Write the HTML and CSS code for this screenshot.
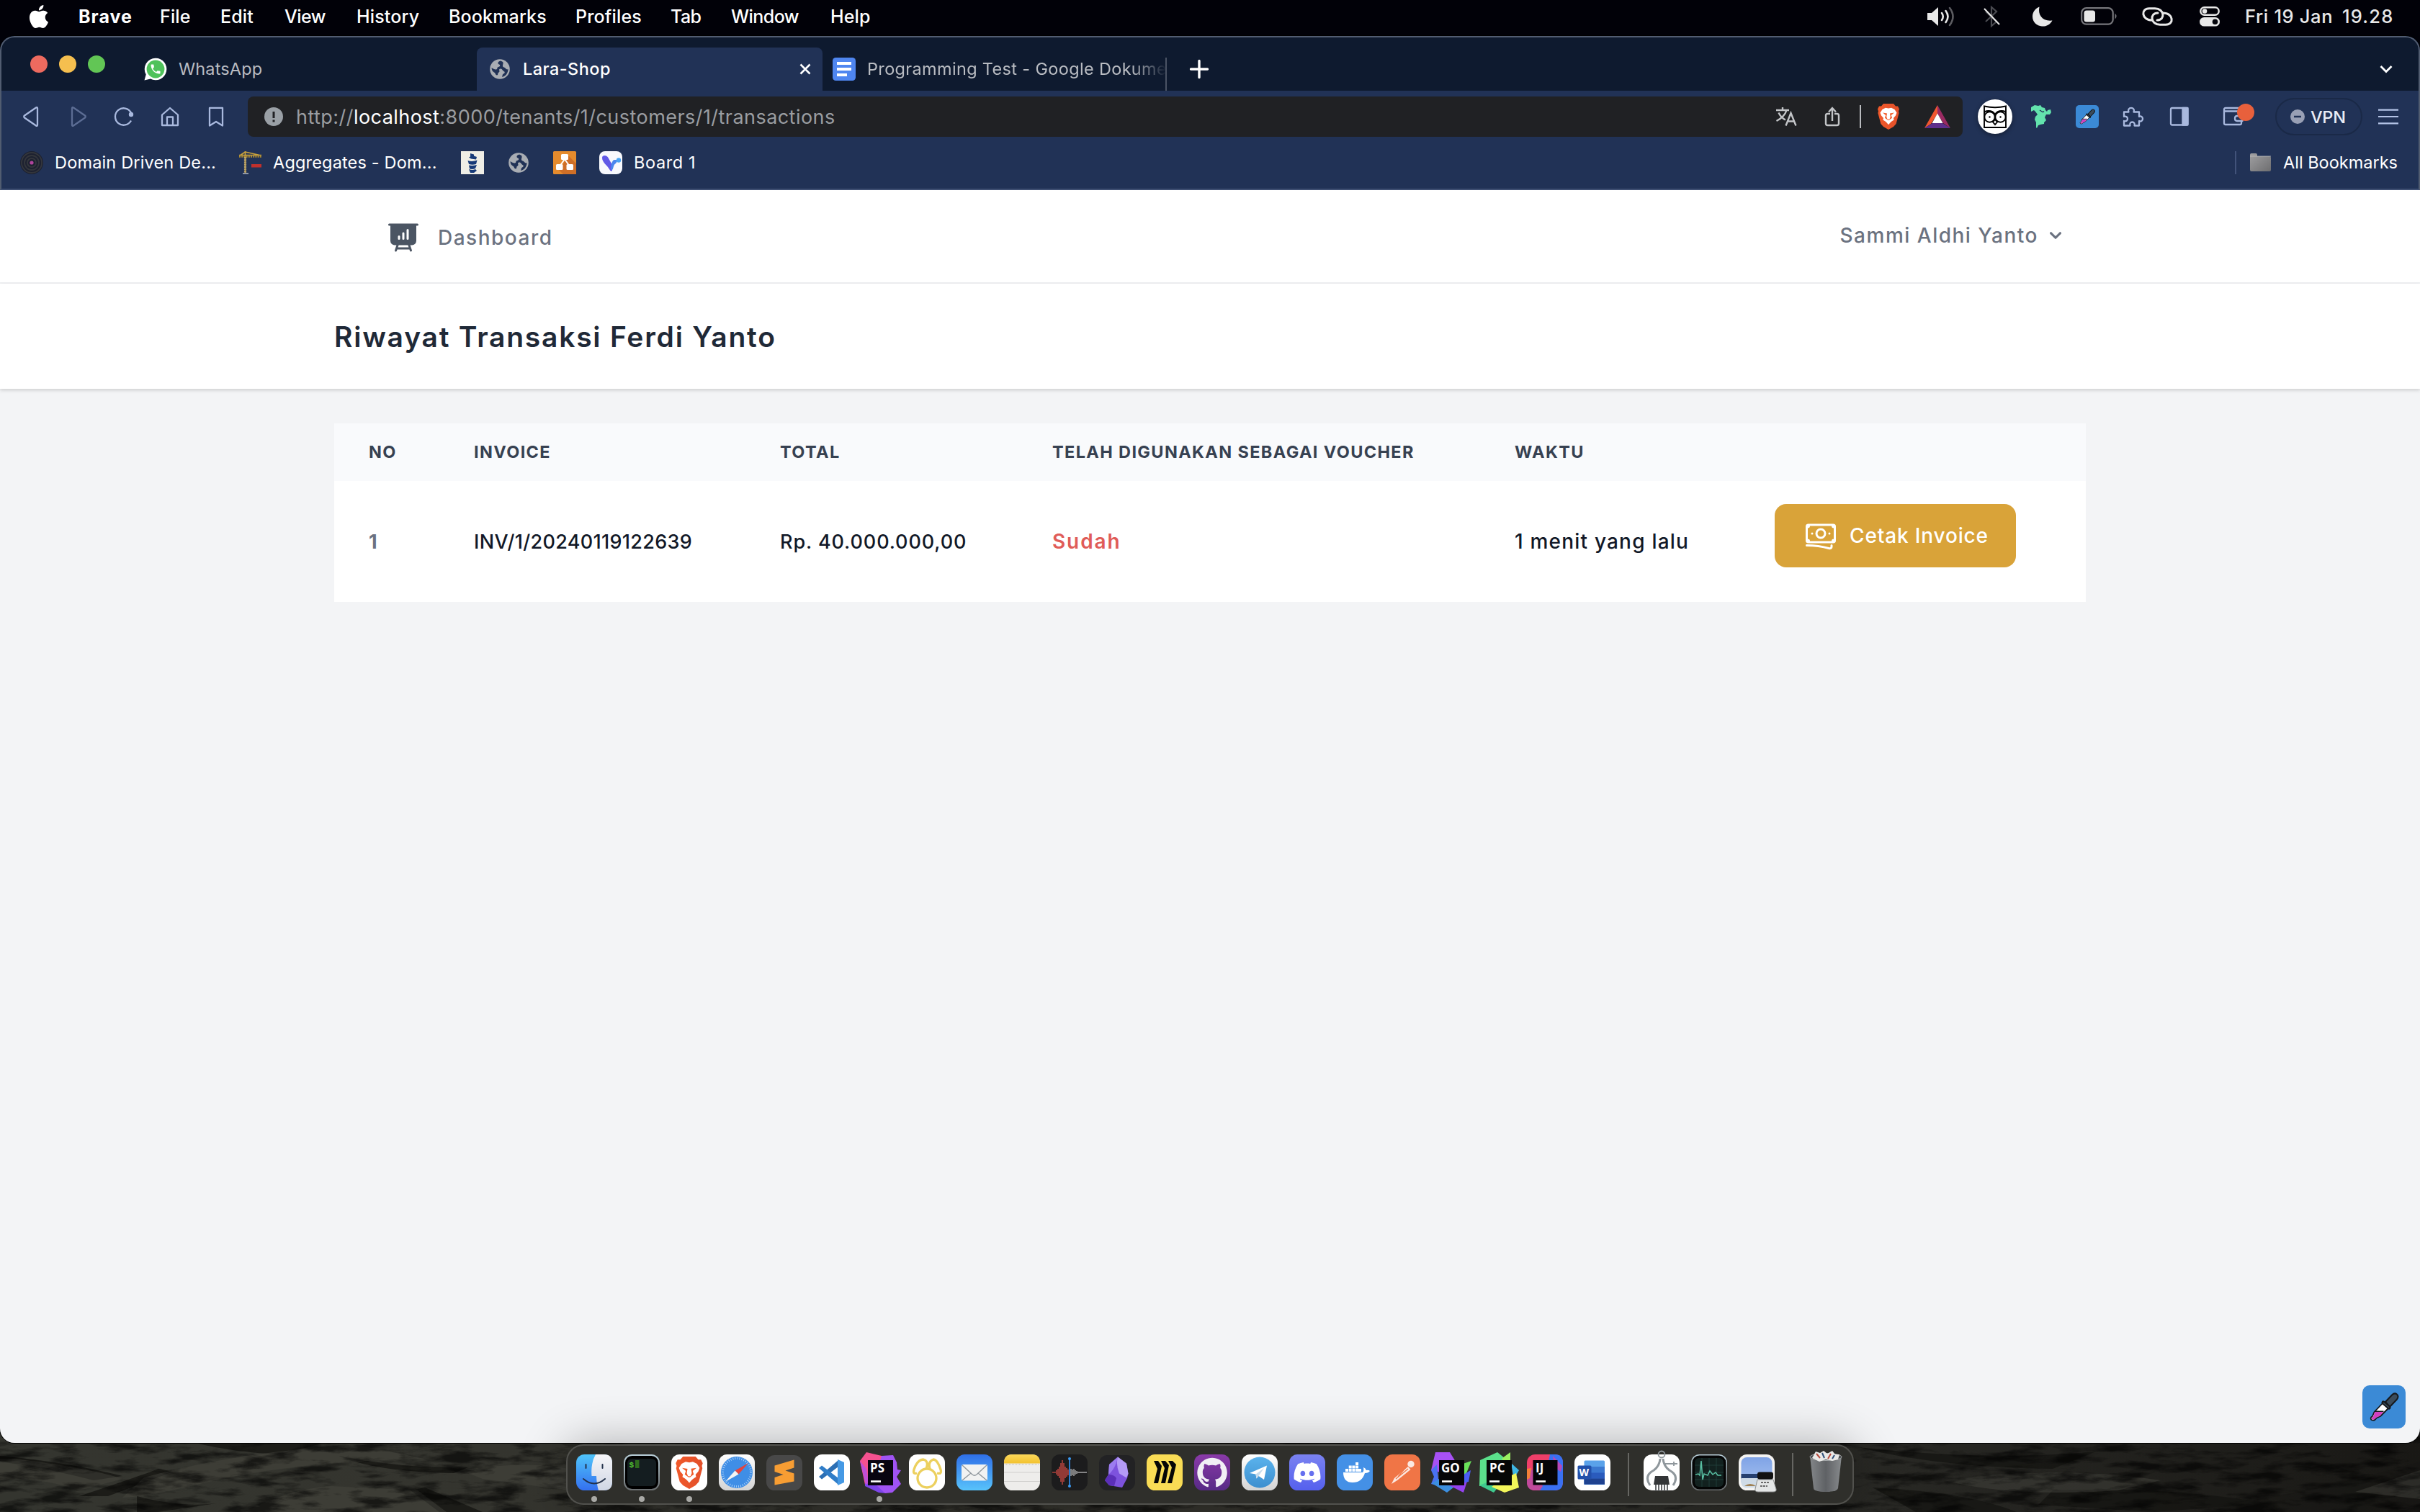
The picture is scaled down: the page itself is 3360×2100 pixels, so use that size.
FILE: index.html
```html
<!DOCTYPE html>
<html lang="id">
<head>
<meta charset="utf-8">
<title>Lara-Shop</title>
<link rel="stylesheet" href="styles.css">
</head>
<body>
<svg class="defs" width="0" height="0" aria-hidden="true">
  <symbol id="lion" viewBox="0 0 32 36">
    <path fill="url(#lionGrad)" d="M9 0h14l3 3.400h3l2 4-1 3 .6 2.600-4 15-3.600 4L16 36l-7-4-3.600-4-4-15 .600-2.600-1-3 2-4h3z"/>
    <path fill="#fff" d="M16 6.600l4-.800 4.500 2.200 3 4.500-1.500 4-3 3.500.6 2.500L16 27.500 8.400 22.500l.6-2.500-3-3.500-1.500-4 3-4.500L12 5.800z"/>
    <path fill="#f05a28" d="M8 12.600l6 .900-.8 4.800 1.300 3.200L16 22l1.500-.500 1.300-3.200-.8-4.800 6-.900-4.200 3.400 1.200 3.800L16 23.600l-5-3.800 1.200-3.800z"/>
    <path fill="#fff" d="M12 24.500l4-1.800 4 1.800-4 4.700z"/>
  </symbol>
  <symbol id="globe" viewBox="0 0 28 28">
    <circle cx="14" cy="14" r="13.800" fill="#a9adb3"/>
    <path fill="#213256" d="M15 2.500c-4 1-4.500 4-2 5 2 .8 1.500 3-1 3.500-2.200.5-1 2.500-2.500 3.200-1.600.8-4.500-.2-6.900-2.200 0 3 .8 5 3.400 6.500 2 1 1.500 2.500 2.800 3.500 1.200 1 2.500.5 2.500-1.500 0-2 3-2 2-4.500-.6-1.500 0-2.500 1.700-2.500 2.500 0 2.500 2.500 4.500 3.500 2 1 1.500 2.500-.5 3.500s-1 3-2 4.500c4.500-1 8.500-5 8.500-11-1 .8-2.600.4-3.500-1-1.200-2-3.500-1-4-3C17.600 8 19 7 18.500 5c-.3-1.500-2-1.500-3.500-2.500z"/>
  </symbol>
  <symbol id="dropper" viewBox="0 0 60 60">
    <path d="M12.500 48c-1.500-2-1-3.500 1.500-5l2.500-6 12.500-13 8 7-12 12-5.500 2.500c-1.500 2.500-4 4-7 2.500z" fill="#fff" stroke="#16191d" stroke-width="1.800" stroke-linejoin="round"/>
    <path d="M13.300 47.300c-1-1.500-.5-2.300 1.700-3.800L17.500 37H29l-4.500 5.500-5.500 2.500c-1.500 2.500-3.700 3.300-5.700 2.300z" fill="#d23fc0"/>
    <path d="M17 36.200h12.500" stroke="#16191d" stroke-width="1.600"/>
    <path d="M32 23l9-9.500c5-5 11 .5 7 6L38 30z" fill="#3b4c5c" stroke="#16191d" stroke-width="2"/>
    <path d="M29 24l8 7" stroke="#16191d" stroke-width="5" stroke-linecap="round"/>
    <path d="M29.500 24.500l7 6" stroke="#3b4c5c" stroke-width="1.600" stroke-linecap="round"/>
  </symbol>
  <defs>
    <linearGradient id="lionGrad"><stop offset="0" stop-color="#f1592a"/><stop offset="1" stop-color="#e2502a"/></linearGradient>
    <linearGradient id="gBlue" x2="0" y2="1"><stop offset="0" stop-color="#2f6fe8"/><stop offset="1" stop-color="#58c3fb"/></linearGradient>
    <linearGradient id="gFinder" x2="0" y2="1"><stop offset="0" stop-color="#4fc4fa"/><stop offset="1" stop-color="#3470ef"/></linearGradient>
    <linearGradient id="gFace" x2="0" y2="1"><stop offset="0" stop-color="#f6f6f9"/><stop offset="1" stop-color="#cfd6e4"/></linearGradient>
    <linearGradient id="gPurple" x2="0" y2="1"><stop offset="0" stop-color="#8a3aa8"/><stop offset="1" stop-color="#572a86"/></linearGradient>
    <linearGradient id="gDiscord" x2="0" y2="1"><stop offset="0" stop-color="#7a82f0"/><stop offset="1" stop-color="#5560ee"/></linearGradient>
    <linearGradient id="gTele" x2="0" y2="1"><stop offset="0" stop-color="#5ab2ec"/><stop offset="1" stop-color="#3d8fcf"/></linearGradient>
    <linearGradient id="gGrey" x2="0" y2="1"><stop offset="0" stop-color="#ffffff"/><stop offset="1" stop-color="#d4d4d4"/></linearGradient>
    <linearGradient id="gNote" x2="0" y2="1"><stop offset="0" stop-color="#fbd85a"/><stop offset="1" stop-color="#f2c12e"/></linearGradient>
    <linearGradient id="gTrash"><stop offset="0" stop-color="#8b8e91"/><stop offset=".5" stop-color="#63666a"/><stop offset="1" stop-color="#909396"/></linearGradient>
    <linearGradient id="gFolder" x2="1" y2="1"><stop offset="0" stop-color="#a0a0a2"/><stop offset="1" stop-color="#6e6e70"/></linearGradient>
    <linearGradient id="gSteel" x2="0" y2="1"><stop offset="0" stop-color="#b9d0da"/><stop offset="1" stop-color="#6a6e70"/></linearGradient>
    <linearGradient id="gSky" x2="0" y2="1"><stop offset="0" stop-color="#7fa3e6"/><stop offset="1" stop-color="#a9c4f0"/></linearGradient>
    <linearGradient id="gLand"><stop offset="0" stop-color="#34352f"/><stop offset=".5" stop-color="#34332d"/><stop offset=".75" stop-color="#2a2a26"/><stop offset="1" stop-color="#191815"/></linearGradient>
    <filter id="rock" x="0" y="0" width="100%" height="100%"><feTurbulence type="fractalNoise" baseFrequency=".018 .07" numOctaves="5" seed="11"/><feColorMatrix values="0 0 0 0 0  0 0 0 0 0  0 0 0 0 0  3.400 0 0 0 -1.500"/></filter>
  </defs>
</svg>

<svg class="desktop" viewBox="0 0 3360 140" width="3360" height="140" preserveAspectRatio="none">
  <rect width="3360" height="140" fill="url(#gLand)"/>
  <g fill="#141411" opacity=".75">
    <path d="M270 44h180l-60 16q-60-2-120-16z"/>
    <path d="M0 62q90 8 170 28l-40 6Q60 78 0 70z"/>
    <path d="M110 118q90-30 110-38l20 4-90 34zM470 62q90 18 180 16l-20 8q-110-2-160-24z"/>
    <path d="M190 118q60 16 110 10l-80 12h-30zM590 106l80 34h-60l-40-30z"/>
    <path d="M2580 50q180 20 330 6l-60 24q-160-2-270-30zM2850 110q160-6 300 18l-160 12-160-10z"/>
    <path d="M3080 130q120-14 280-60v70h-280z" opacity=".4"/>
    <path d="M2600 106q130 6 200 34h-140z"/>
  </g>
  <g fill="#484840" opacity=".45">
    <path d="M20 66q110 14 150 28l-60 16Q50 90 0 96V66z"/>
    <path d="M200 92q150-40 300-44l90 18q-180 4-300 32-90 22-120 22z"/>
    <path d="M340 140q60-32 120-36l120 6 40 30zM640 82q90-14 150-2v30l-120-16z"/>
    <path d="M2700 96q160-22 300 0l-60 14q-150 10-240-14zM3270 112l90-30v40z"/>
  </g>
  <rect width="3360" height="140" filter="url(#rock)" opacity=".6"/>
</svg>

<header class="menubar">
  <nav class="menus">
    <svg class="apple" viewBox="0 0 24 24" width="32" height="32"><path fill="#fff" d="M12.152 6.896c-.948 0-2.415-1.078-3.960-1.040-2.040.027-3.910 1.183-4.961 3.014-2.117 3.675-.546 9.103 1.519 12.090 1.013 1.454 2.208 3.090 3.792 3.039 1.520-.065 2.090-.987 3.935-.987 1.831 0 2.350.987 3.960.948 1.637-.026 2.676-1.480 3.676-2.948 1.156-1.688 1.636-3.325 1.662-3.415-.039-.013-3.182-1.221-3.220-4.857-.026-3.040 2.480-4.494 2.597-4.559-1.429-2.090-3.623-2.324-4.390-2.376-2-.156-3.675 1.090-4.610 1.090zM15.530 3.830c.843-1.012 1.400-2.427 1.245-3.830-1.207.052-2.662.805-3.532 1.818-.780.896-1.454 2.338-1.273 3.714 1.338.104 2.715-.688 3.559-1.701"/></svg>
    <b>Brave</b><span>File</span><span>Edit</span><span class="snug">View</span><span>History</span><span>Bookmarks</span><span>Profiles</span><span class="snug">Tab</span><span class="snug">Window</span><span>Help</span>
  </nav>
  <div class="status">
    <svg viewBox="0 0 40 28" width="40" height="28"><path fill="#e8e8e8" d="M0 9h6l9-8v26l-9-8H0z"/><g fill="none" stroke-width="2.600" stroke-linecap="round"><path stroke="#e8e8e8" d="M20 9q3.500 5 0 10M25.500 6q6 8 0 16"/><path stroke="#5b5b60" d="M31 2q9 12 0 24"/></g></svg>
    <svg viewBox="0 0 24 30" width="24" height="30"><path d="M3 8l15 14-7 6V2l7 6L3 22" fill="none" stroke="#4a4b51" stroke-width="2.200"/><path d="M1 4l21 22" stroke="#e8e8e8" stroke-width="2"/></svg>
    <svg viewBox="0 0 28 28" width="28" height="28"><path fill="#e8e8e8" d="M9.500.5C7 12 14 21 27.500 19.500 24 26 18 28 13 27.500 6 27 0 21.500 0 14 0 8 3.500 3 9.500.5z"/></svg>
    <svg viewBox="0 0 52 26" width="52" height="26"><rect x="1.200" y="1.200" width="43.500" height="22.500" rx="6.500" fill="none" stroke="#77777c" stroke-width="2.200"/><rect x="4.500" y="4.500" width="15.500" height="16" rx="3.500" fill="#e8e8e8"/><path d="M47.500 8.500q4 4 0 8z" fill="#77777c"/></svg>
    <svg viewBox="0 0 44 26" width="44" height="26"><g fill="none" stroke="#e8e8e8" stroke-width="3" stroke-linecap="round"><path d="M14 18C-1 18-2 1.700 10 1.700h8C31 1.700 33 18 21 18"/><path d="M29 8c15 0 16 16.300 4 16.300h-8C12 24.300 10 8 22 8"/></g></svg>
    <svg viewBox="0 0 28 28" width="28" height="28"><rect x="1.300" y="1.300" width="25.400" height="10.400" rx="5.200" fill="none" stroke="#e8e8e8" stroke-width="2.400"/><circle cx="7" cy="6.500" r="3.300" fill="#e8e8e8"/><rect y="15" width="28" height="12.600" rx="6.300" fill="#e8e8e8"/><circle cx="21.500" cy="21.300" r="3.800" fill="#04050c"/></svg>
    <span class="date">Fri 19 Jan</span><span class="time">19.28</span>
  </div>
</header>

<div class="window">
  <div class="chrome">
    <div class="tabstrip">
      <div class="lights"><i class="red"></i><i class="yellow"></i><i class="green"></i></div>
      <div class="tab">
        <svg viewBox="0 0 32 32" width="32" height="32"><path fill="#fff" d="M16 .8a15.200 15.200 0 1 1-7 28.600L.5 31.500l2.200-8A15.200 15.200 0 0 1 16 .8z"/><circle cx="16" cy="16" r="12.400" fill="#4fc25a"/><path transform="translate(7.400 7.400) scale(.72)" fill="#fff" d="M6.620 10.790c1.440 2.830 3.760 5.140 6.590 6.590l2.200-2.200c.270-.270.670-.360 1.020-.240 1.120.370 2.330.570 3.570.570.550 0 1 .450 1 1V20c0 .550-.450 1-1 1-9.390 0-17-7.610-17-17 0-.550.450-1 1-1h3.500c.550 0 1 .450 1 1 0 1.250.200 2.450.570 3.570.110.350.030.740-.250 1.020l-2.200 2.200z"/></svg>
        <span class="tab-title">WhatsApp</span>
      </div>
      <div class="tab active">
        <svg width="32" height="32" viewBox="-2 -2 32 32"><use href="#globe" width="28" height="28"/></svg>
        <span class="tab-title">Lara-Shop</span>
        <svg class="close" viewBox="0 0 16 16" width="16" height="16"><path d="M1.500 1.500l13 13m0-13l-13 13" stroke="#fff" stroke-width="2.600"/></svg>
      </div>
      <div class="tab docs">
        <svg viewBox="0 0 32 32" width="32" height="32"><rect width="32" height="32" rx="4.500" fill="#4f86f0"/><path d="M6 8h20M6 16h20M6 24h14" stroke="#fff" stroke-width="4"/></svg>
        <span class="tab-title fade">Programming Test - Google Dokume</span>
      </div>
      <svg class="plus" viewBox="0 0 26 26" width="26" height="26"><path d="M13 1.500v23M1.500 13h23" stroke="#fff" stroke-width="3.400" stroke-linecap="round"/></svg>
      <svg class="chevron" viewBox="0 0 18 12" width="18" height="12"><path d="M1.500 2L9 9.500 16.500 2" fill="none" stroke="#fff" stroke-width="2.800"/></svg>
    </div>

    <div class="toolbar">
      <div class="navbtns">
        <svg viewBox="0 0 32 32" width="32" height="32"><path d="M24 4.500v23c0 1.500-1 1.800-2 1L6 17.500c-1-.8-1-2.200 0-3L22 3.500c1-.8 2-.5 2 1z"/></svg>
        <svg class="dim" viewBox="0 0 32 32" width="32" height="32"><path d="M8 4.500v23c0 1.500 1 1.800 2 1l16-11c1-.8 1-2.200 0-3L10 3.500c-1-.8-2-.5-2 1z"/></svg>
        <svg viewBox="0 0 32 32" width="32" height="32"><path d="M26 21.500A11.700 11.700 0 1 1 26 10.500"/><circle cx="26" cy="13" r="3.200" class="solid"/></svg>
        <svg viewBox="0 0 32 32" width="32" height="32"><path d="M5 13.500L16 4l11 9.500V28H5zM12 28V16.500h8V28"/></svg>
        <svg viewBox="0 0 32 32" width="32" height="32"><path d="M7 3.800h18V28.500l-9-5.500-9 5.500z"/></svg>
      </div>
      <div class="address">
        <svg class="info" viewBox="0 0 26 26" width="26" height="26"><circle cx="13" cy="13" r="13" fill="#9aa0a6"/><path d="M13 6v9M13 17.500v3" stroke="#202124" stroke-width="3"/></svg>
        <p class="url"><span>http://</span><b>localhost</b><span>:8000/tenants/1/customers/1/transactions</span></p>
        <svg viewBox="0 0 30 28" width="30" height="28"><g fill="none" stroke="#c3c5c8" stroke-width="2.400"><path d="M1 5h18M10 1v4M15.500 5C14 11 8 17 1.500 20M4.500 8.500C7 14 10 16.500 14 18.500M14.500 26.500L21.500 9l7 17.500M17 20.500h9"/></g></svg>
        <svg viewBox="0 0 22 28" width="22" height="28"><g fill="none" stroke="#c3c5c8" stroke-width="2.400"><path d="M8 10H4.500Q2 10 2 12.500V23.500Q2 26 4.500 26h13Q20 26 20 23.500v-11Q20 10 17.500 10H14M11 20V2.500M6 7.500L11 2l5 5.500"/></g></svg>
        <i class="bar"></i>
        <svg viewBox="0 0 32 36" width="32" height="36"><use href="#lion"/></svg>
        <svg viewBox="0 0 36 32" width="36" height="32"><path fill="#f0562f" d="M18 0v12L9 26 0 32z"/><path fill="#9a2a62" d="M18 0l18 32-10-7-8-13z"/><path fill="#5e2f8c" d="M0 32l11-7h14l11 7z"/><path fill="#fff" d="M18 11.500L25.500 25h-15z"/></svg>
      </div>
      <div class="extensions">
        <svg class="owl" viewBox="0 0 48 48" width="48" height="48"><circle cx="24" cy="24" r="24" fill="#fff"/><g fill="none" stroke="#000" stroke-width="1.900"><path d="M9 9.500q15 3.500 30 0V39H9zM9 19q0-3 6-3t9 5q3-5 9-5t6 3"/><circle cx="16.500" cy="24.500" r="7.200"/><circle cx="31.500" cy="24.500" r="7.200"/><path d="M24 28l3 3.500-3 3.500-3-3.500z"/></g><circle cx="16.500" cy="24.500" r="1.200"/><circle cx="31.500" cy="24.500" r="1.200"/></svg>
        <svg viewBox="0 0 28 32" width="28" height="32"><path fill="#63e3ad" d="M0 3l5-3 5 1 3-1 2 3 4 1 1 3 2 2 1-2 4-1 1 4-2 3-5 0-2 4 2 4-3 3 0 2-5 1-3 1-2 4-1-1 0-7-2-4 1-4 3-3-3-4-2-2-4 2z"/><path d="M12 7l4 2.500M18 8.500l-2 1.500" stroke="#213256" stroke-width="1.400"/></svg>
        <svg viewBox="0 0 32 32" width="32" height="32"><rect width="32" height="32" rx="5" fill="#3b8ad6"/><use href="#dropper" width="32" height="32"/></svg>
        <svg class="line" viewBox="0 0 32 32" width="32" height="32"><path d="M4 9.500h6.500c-1.500-3 .5-5.700 3.500-5.700s5 2.700 3.500 5.700H25v6.500c2.500-1.500 5 .5 5 3s-2.500 4.500-5 3V28.500h-6.500c1-3-.8-5-3-5s-4 2-3 5H4V22c3 1 5-.8 5-3s-2-4-5-3z" transform="translate(-1 0)"/></svg>
        <svg class="line" viewBox="0 0 32 32" width="32" height="32"><rect x="4" y="4" width="23.500" height="23.500" rx="2"/><path class="solid" d="M20.500 4h7v23.500h-7z"/></svg>
      </div>
      <div class="wallet">
        <svg class="line" viewBox="0 0 32 32" width="32" height="32"><path d="M27 9V6q0-2-2-2H5Q3 4 3 6v19q0 2 2 2h20q2 0 2-2v-3M3 8.500h22q2.500 0 2.500 2.500M28.500 15H21q-3 0-3 3.500t3 3.500h7.500z"/></svg>
        <i class="badge"></i>
      </div>
      <div class="vpn"><svg viewBox="0 0 20 20" width="20" height="20"><circle cx="10" cy="10" r="10" fill="#99a0b5"/><path d="M5 10h10" stroke="#213256" stroke-width="2.600"/></svg><span>VPN</span></div>
      <svg class="burger" viewBox="0 0 28 22" width="28" height="22"><path d="M0 1.600h28M0 11h28M0 20.400h28" stroke="#b4c3e6" stroke-width="2.200"/></svg>
    </div>

    <div class="bookmarks">
      <svg viewBox="0 0 32 32" width="32" height="32"><rect width="32" height="32" rx="16" fill="#1d2130"/><g fill="none" stroke="#33363c" stroke-width="1.800"><circle cx="16" cy="16" r="14"/><circle cx="16" cy="16" r="10"/><circle cx="16" cy="16" r="6"/></g><circle cx="16" cy="16" r="2.600" fill="#b0459c"/></svg>
      <span>Domain Driven De...</span>
      <svg viewBox="0 0 32 32" width="32" height="32"><path d="M8.500 0v30M0 5.500h31M8.500 1l20 4.500M8.500 1L1 6" fill="none" stroke="#c8a13c" stroke-width="1.600"/><path d="M0 7.500h31" stroke="#b08c30" stroke-width="2.400" stroke-dasharray="2 1.200"/><path d="M8.500 8v22" stroke="#b9a36a" stroke-width="3.200" stroke-dasharray="2.200 1"/><rect x="17" y="18" width="14" height="4.500" fill="#c0302c"/><path d="M5 31h8" stroke="#8f98a8" stroke-width="2"/></svg>
      <span>Aggregates - Dom...</span>
      <svg viewBox="0 0 32 32" width="32" height="32"><rect width="32" height="32" fill="#efeee6"/><path fill="#173a78" d="M13 3l5 1.500v2l4 1.500-1 3.500-7-1-3-2 2-1zM9.500 13q6 2 13-.5l-1.500 5.500q-5 1.500-10 0zM11 19.500q5 1 11-.5l-2 5q-4 1.500-8 .5zM11 25q5 2 9 0l2 2-4 3h-5z"/></svg>
      <svg viewBox="-2 -2 32 32" width="32" height="32"><use href="#globe" width="28" height="28"/></svg>
      <svg viewBox="0 0 32 32" width="32" height="32"><rect width="32" height="32" rx="1.500" fill="#e58b2d"/><path fill="#cf6f27" d="M20 5l12 12v15H14L8 26l6-8z"/><path d="M16 11l-7 10M16 11l7 10" stroke="#fff" stroke-width="2"/><g fill="#fff"><rect x="11" y="4" width="10" height="8" rx="1.500"/><rect x="4" y="18" width="9.500" height="8" rx="1.500"/><rect x="18.500" y="18" width="9.500" height="8" rx="1.500"/></g></svg>
      <svg viewBox="0 0 32 32" width="32" height="32"><rect width="32" height="32" rx="8" fill="#f8f9fd"/><path fill="#6159e6" d="M4 9c0-4 7-4 9 1l5 9 0 8q-2 2-4-2C11 19 4 16 4 9z"/><path fill="#4a87ee" d="M17 26c-2 0 0-14 4-14h4c0 5-4 5-5 9-1 3-1 5-3 5z"/><circle cx="27" cy="12.500" r="3.200" fill="#4aa4f4"/></svg>
      <span class="loose">Board 1</span>
      <div class="allbm">
        <svg viewBox="0 0 30 26" width="30" height="26"><path d="M1 2q0-2 2-2h6q2 0 2 2v2h17q2 0 2 2v17q0 2-2 2H3q-2 0-2-2z" fill="url(#gFolder)"/><path d="M1 4h29" stroke="#c0c0c2" stroke-width=".8"/></svg>
        <span>All Bookmarks</span>
      </div>
    </div>
  </div>

  <div class="page">
    <nav class="nav">
      <div class="container">
        <a class="brand">
          <svg viewBox="0 0 24 24" width="48" height="48"><path fill="#4b5563" fill-rule="evenodd" d="M2.250 2.250a.75.75 0 000 1.500H3v10.500a3 3 0 003 3h1.210l-1.172 3.513a.75.75 0 001.424.474l.329-.987h8.418l.330.987a.75.75 0 001.422-.474l-1.170-3.513H18a3 3 0 003-3V3.750h.75a.75.75 0 000-1.500H2.250zm6.040 16.500l.5-1.500h6.420l.5 1.500H8.290zm7.460-12a.75.75 0 00-1.500 0v6a.75.75 0 001.500 0v-6zm-3 2.250a.75.75 0 00-1.500 0v3.750a.75.75 0 001.500 0V9zm-3 2.250a.75.75 0 00-1.500 0v1.500a.75.75 0 001.500 0v-1.500z"/></svg>
          <span>Dashboard</span>
        </a>
        <a class="user"><span>Sammi Aldhi Yanto</span>
          <svg viewBox="0 0 20 20" width="32" height="32"><path fill="#6b7280" d="M5.293 7.293a1 1 0 011.414 0L10 10.586l3.293-3.293a1 1 0 111.414 1.414l-4 4a1 1 0 01-1.414 0l-4-4a1 1 0 010-1.414z"/></svg>
        </a>
      </div>
    </nav>
    <div class="heading"><h1>Riwayat Transaksi Ferdi Yanto</h1></div>
    <main>
      <table>
        <colgroup><col class="c1"><col class="c2"><col class="c3"><col class="c4"><col class="c5"><col class="c6"></colgroup>
        <thead><tr><th>NO</th><th>INVOICE</th><th>TOTAL</th><th>TELAH DIGUNAKAN SEBAGAI VOUCHER</th><th>WAKTU</th><th></th></tr></thead>
        <tbody><tr>
          <td class="num">1</td><td class="invoice">INV/1/20240119122639</td><td class="total">Rp. 40.000.000,00</td><td class="used">Sudah</td><td class="ago">1 menit yang lalu</td>
          <td><button class="print"><svg viewBox="0 0 24 24" width="48" height="48"><path d="M2.250 18.750a60.070 60.070 0 0115.797 2.101c.727.198 1.453-.342 1.453-1.096V18.750M3.750 4.500v.75A.75.75 0 013 6h-.75m0 0v-.375c0-.621.504-1.125 1.125-1.125H20.250M2.250 6v9m18-10.500v.75c0 .414.336.75.75.75h.75m-1.500-1.500h.375c.621 0 1.125.504 1.125 1.125v9.750c0 .621-.504 1.125-1.125 1.125h-.375m1.500-1.500H21a.75.75 0 00-.75.75v.75m0 0H3.750m0 0h-.375a1.125 1.125 0 01-1.125-1.125V15m1.500 1.500v-.75A.75.75 0 003 15h-.75M15 10.500a3 3 0 11-6 0 3 3 0 016 0zm3 0h.008v.008H18V10.500zm-12 0h.008v.008H6V10.500z" fill="none" stroke="#fff" stroke-width="1.500" stroke-linecap="round" stroke-linejoin="round"/></svg><span>Cetak Invoice</span></button></td>
        </tr></tbody>
      </table>
    </main>
    <svg class="picker" viewBox="0 0 60 60" width="60" height="60"><rect width="60" height="60" rx="10" fill="#3b8ad6"/><use href="#dropper" width="60" height="60"/></svg>
  </div>
</div>

<footer class="dock">
  <div class="app running"><svg viewBox="0 0 50 50" width="50" height="50"><rect width="50" height="50" rx="11.500" fill="url(#gFinder)"/><path d="M27 0h11.500Q50 0 50 11.500v27Q50 50 38.500 50H31q-2.500-8-3-20h-6.500Q20 12 27 0z" fill="url(#gFace)"/><path d="M13.500 14v5M36.500 14v5M10 34q15 13 30 0" fill="none" stroke="#23314a" stroke-width="2" stroke-linecap="round"/></svg></div>
  <div class="app running"><svg viewBox="0 0 50 50" width="50" height="50"><rect width="50" height="50" rx="11.500" fill="url(#gSteel)"/><rect x="2" y="2" width="46" height="46" rx="9.500" fill="#000"/><rect x="5" y="6" width="40" height="38" rx="6" fill="#141d20"/><text x="7.500" y="18" class="mono" font-size="11" fill="#54c832">$</text><rect x="16" y="8" width="5.500" height="11" fill="#2f6d1e"/></svg></div>
  <div class="app running"><svg viewBox="0 0 50 50" width="50" height="50"><rect width="50" height="50" rx="11.500" fill="#fff"/><use href="#lion" x="5" y="3" width="40" height="45"/></svg></div>
  <div class="app"><svg viewBox="0 0 50 50" width="50" height="50"><rect width="50" height="50" rx="11.500" fill="url(#gGrey)"/><circle cx="25" cy="25" r="22" fill="#3f8ee6"/><circle cx="25" cy="25" r="19.500" fill="none" stroke="#b9dafa" stroke-width="3" stroke-dasharray=".8 2.260"/><path d="M41 12L27.500 27.500 22.500 22.500z" fill="#e5443d"/><path d="M9 38l13.500-15.500 5 5z" fill="#f4f4f4"/></svg></div>
  <div class="app"><svg viewBox="0 0 50 50" width="50" height="50"><rect y="1" width="50" height="49" rx="11.500" fill="#484848"/><path d="M11.500 15.500l27-8v11l-12 4 12 4v11l-27 5V32l12-4-12-4z" fill="#f79d33"/></svg></div>
  <div class="app"><svg viewBox="0 0 50 50" width="50" height="50"><rect width="50" height="50" rx="11.500" fill="#fff"/><path d="M34 8L7 31l4 3.500L34 17z" fill="#2c6fb4"/><path d="M7 19l4-3.500L34 33v9z" fill="#2f7dc8"/><path d="M33 7l9 4v28l-9 4z" fill="#4599e4"/></svg></div>
  <div class="app running"><svg viewBox="0 0 50 50" width="50" height="50"><path d="M-2 9L7-3l21 5 1 10L5 42z" fill="#f5518f"/><path d="M28 2l16-1 5 10 1 10 5 1-6 9 6 10-12 12-10 1-18-9z" fill="#a053f4"/><path d="M5 40l15 2 13 12-9-1L5 44z" fill="#7e45ea"/><path d="M-2 9l8 33 4-2-3-20z" fill="#c04fd8"/><rect x="9" y="8" width="35" height="35" fill="#080510"/><text x="12" y="25" class="jb">PS</text><path d="M13 37.500h14" stroke="#fff" stroke-width="2.600"/></svg></div>
  <div class="app"><svg viewBox="0 0 50 50" width="50" height="50"><rect width="50" height="50" rx="11.500" fill="#fff"/><g fill="none" stroke="#ecd05e" stroke-width="3.300" stroke-linejoin="round"><circle cx="25" cy="33" r="13"/><path d="M11 26Q5 28 7 21 11 8 20 7q8 2 4 13M39 26q7 2 5-5Q40 8 34 7q-8 3-5 13" /></g></svg></div>
  <div class="app"><svg viewBox="0 0 50 50" width="50" height="50"><rect width="50" height="50" rx="11.500" fill="url(#gBlue)"/><rect x="7" y="14" width="36" height="22.500" rx="2.500" fill="#f1f2f2"/><path d="M8 15l14 13q3 2.500 6 0l14-13M8 36l12-10M42 36L30 26" fill="none" stroke="#8f979d" stroke-width="1.400"/></svg></div>
  <div class="app"><svg viewBox="0 0 50 50" width="50" height="50"><rect width="50" height="50" rx="11.500" fill="#eeedeb"/><path d="M0 12.500v-1Q0 0 11.500 0h27Q50 0 50 11.500v1z" fill="url(#gNote)"/><path d="M0 25h50M0 37.500h50" stroke="#d0cfcd" stroke-width="1"/><path d="M1 14h48" stroke="#bdb9ae" stroke-width="1.200" stroke-dasharray="1 1"/></svg></div>
  <div class="app"><svg viewBox="0 0 50 50" width="50" height="50"><rect width="50" height="50" rx="11.500" fill="#1c1c1d"/><path d="M1 25h5M7 22v6M9 20v10M11 17v16M13 12v26M15 8v34M17 12v26M19 17v16M21 19v12M23 21v8" stroke="#a9403b" stroke-width="1.700"/><path d="M27 20v10M29 21v8M31 20v10M33 22v6M35 23v4M36 25h13" stroke="#a5a5a6" stroke-width="1.400"/><path d="M25 6v38" stroke="#2f86e0" stroke-width="1.800"/><circle cx="25" cy="6" r="2" fill="#3a9bf5"/><circle cx="25" cy="44" r="2" fill="#3a9bf5"/></svg></div>
  <div class="app"><svg viewBox="0 0 50 50" width="50" height="50"><rect y="1" width="50" height="49" rx="11.500" fill="#222224"/><path d="M26 3.500L14 14l-1 14-5 8 6 7 18 3 7-13 1.500-6-2.500-14z" fill="#7d52dd"/><path d="M26 3.500L14 14l-1 14q10-8 13-24.500z" fill="#9c7cf0"/><path d="M26 3.500q-3 10 2 23l10 6 2.500-6-2.500-14z" fill="#b49bf6"/><path d="M13 28q8 0 11 5l-3 11-7-1-6-7z" fill="#5b2fb8"/></svg></div>
  <div class="app"><svg viewBox="0 0 50 50" width="50" height="50"><rect width="50" height="50" rx="11.500" fill="#f9dc55"/><path d="M10 9h6l5 7-5 24h-6l5-20zM20 9h6l5 6-5 25h-6l5-21zM30 9h6l5 5-6 26h-6l6-22z" fill="#060606"/></svg></div>
  <div class="app"><svg viewBox="0 0 50 50" width="50" height="50"><rect width="50" height="50" rx="11.500" fill="url(#gPurple)"/><path transform="translate(4.300 4.200) scale(1.730)" fill="#f1eff5" d="M12 .297c-6.630 0-12 5.373-12 12 0 5.303 3.438 9.800 8.205 11.385.6.113.82-.258.82-.577 0-.285-.01-1.040-.015-2.040-3.338.724-4.042-1.610-4.042-1.610C4.422 18.070 3.633 17.700 3.633 17.700c-1.087-.744.084-.729.084-.729 1.205.084 1.838 1.236 1.838 1.236 1.070 1.835 2.809 1.305 3.495.998.108-.776.417-1.305.760-1.605-2.665-.3-5.466-1.332-5.466-5.930 0-1.310.465-2.380 1.235-3.220-.135-.303-.540-1.523.105-3.176 0 0 1.005-.322 3.300 1.230.960-.267 1.980-.399 3-.405 1.020.006 2.040.138 3 .405 2.280-1.552 3.285-1.230 3.285-1.230.645 1.653.240 2.873.120 3.176.765.840 1.230 1.910 1.230 3.220 0 4.610-2.805 5.625-5.475 5.920.420.360.810 1.096.810 2.220 0 1.606-.015 2.896-.015 3.286 0 .315.210.690.825.570C20.565 22.092 24 17.592 24 12.297c0-6.627-5.373-12-12-12"/></svg></div>
  <div class="app"><svg viewBox="0 0 50 50" width="50" height="50"><rect width="50" height="50" rx="11.500" fill="url(#gGrey)"/><circle cx="25" cy="25" r="21.500" fill="url(#gTele)"/><path d="M11 26l24-10.500-4 19.500-7.500-5-3 3.500-1-6z" fill="#fff"/><path d="M19.500 27.500L31 19l-7.500 11-3 3.500z" fill="#c7dcec"/></svg></div>
  <div class="app"><svg viewBox="0 0 50 50" width="50" height="50"><rect width="50" height="50" rx="11.500" fill="url(#gDiscord)"/><path transform="translate(6.500 6.500) scale(1.540)" fill="#fff" d="M20.317 4.370a19.791 19.791 0 00-4.885-1.515.074.074 0 00-.079.037c-.211.375-.445.865-.608 1.250-1.845-.276-3.680-.276-5.487 0-.164-.393-.406-.874-.618-1.250a.077.077 0 00-.079-.037 19.736 19.736 0 00-4.885 1.515.070.070 0 00-.032.028C.533 9.046-.319 13.580.099 18.058a.082.082 0 00.031.056c2.053 1.508 4.041 2.423 5.993 3.029a.078.078 0 00.084-.028c.462-.630.873-1.295 1.226-1.994a.076.076 0 00-.042-.106c-.653-.248-1.274-.550-1.872-.892a.077.077 0 01-.008-.128c.126-.094.252-.192.372-.291a.074.074 0 01.078-.011c3.928 1.793 8.180 1.793 12.061 0a.074.074 0 01.079.010c.120.099.246.198.373.292a.077.077 0 01-.007.128 12.299 12.299 0 01-1.873.891.077.077 0 00-.041.107c.360.698.772 1.363 1.225 1.993a.076.076 0 00.084.029c1.961-.607 3.950-1.522 6.002-3.029a.077.077 0 00.031-.055c.500-5.177-.838-9.674-3.549-13.660a.061.061 0 00-.031-.029zM8.020 15.331c-1.183 0-2.157-1.086-2.157-2.419 0-1.333.956-2.419 2.157-2.419 1.211 0 2.176 1.095 2.157 2.419 0 1.333-.956 2.419-2.157 2.419zm7.975 0c-1.183 0-2.157-1.086-2.157-2.419 0-1.333.955-2.419 2.157-2.419 1.211 0 2.176 1.095 2.157 2.419 0 1.333-.946 2.419-2.157 2.419z"/></svg></div>
  <div class="app"><svg viewBox="0 0 50 50" width="50" height="50"><rect width="50" height="50" rx="11.500" fill="#4490e6"/><path fill="#fff" d="M9 25h27q2-2 1-7 3 1 4 4 3-1 5 1-2 3-7 3Q35 39 22 39 9 39 9 25z"/><path fill="#fff" d="M12 20h4v4h-4zM16.700 20h4v4h-4zM21.400 20h4v4h-4zM26.100 20h4v4h-4zM30 20h4v4h-4zM16.700 15.500h4v4h-4zM21.400 15.500h4v4h-4zM26.100 15.500h4v4h-4zM26.100 11h4v4h-4z"/></svg></div>
  <div class="app"><svg viewBox="0 0 50 50" width="50" height="50"><rect width="50" height="50" rx="11.500" fill="#f07546"/><circle cx="37" cy="13.500" r="4.700" fill="#fbe9e2"/><path d="M33 17l3.500 4L18 36l-8 5 4-8z" fill="#fbe9e2"/><path d="M33 20L16 34M30 18L19 31" stroke="#f07546" stroke-width="1.200"/></svg></div>
  <div class="app"><svg viewBox="0 0 50 50" width="50" height="50"><path d="M5-3h20l8 13-20 15L-1 22z" fill="#a851f5"/><path d="M-1 22l8-8 3 30L-1 41l4-10z" fill="#4a72f2"/><path d="M0 40l10-6 25 8-14 11z" fill="#3c8fe0"/><path d="M30 36l22-8-8 25-24-12z" fill="#9442f0"/><path d="M40 14l15-5-9 22z" fill="#69e05a"/><path d="M44 28l10-6-3 16-9 2z" fill="#4a5df5"/><rect x="10" y="8" width="35" height="35" fill="#060608"/><text x="13" y="25" class="jb">GO</text><path d="M14 37.500h14" stroke="#fff" stroke-width="2.600"/></svg></div>
  <div class="app"><svg viewBox="0 0 50 50" width="50" height="50"><path d="M1 8l24-11 10 8L28 40 0 44z" fill="#5be08b"/><path d="M32 5l11-8v18l-12-2z" fill="#9af060"/><path d="M44 12l11 10-7 12z" fill="#3fb7e4"/><path d="M0 43l10-4 18 4-8 10z" fill="#3fc98e"/><path d="M30 36l21-10 4 20-20 7-18-8z" fill="#f3f659"/><rect x="10" y="8" width="35" height="35" fill="#060706"/><text x="14" y="25" class="jb">PC</text><path d="M14 37.500h14" stroke="#fff" stroke-width="2.600"/></svg></div>
  <div class="app"><svg viewBox="0 0 50 50" width="50" height="50"><rect width="50" height="50" rx="11.500" fill="#ef3f69"/><path d="M32 0h7q11 0 11 11.500v27Q50 50 38.500 50H18l8-20z" fill="#3a70f2"/><path d="M0 20l10 2 12 22-4 6h-6Q0 50 0 38.500z" fill="#c04a9c"/><path d="M0 20l6-1-2 14-4 2z" fill="#f58038"/><path d="M36 2l13 14-2 8-9-6z" fill="#b848b6"/><rect x="8.500" y="8" width="34" height="34.500" fill="#050507"/><text x="12" y="25" class="jb">IJ</text><path d="M12.500 37.500h13.500" stroke="#fff" stroke-width="2.600"/></svg></div>
  <div class="app"><svg viewBox="0 0 50 50" width="50" height="50"><rect width="50" height="50" rx="11.500" fill="#fff"/><rect x="13.500" y="8.500" width="28.500" height="33" rx="1.500" fill="#5aa2ea"/><path d="M13.500 17h28.500v25H13.500z" fill="#3b78d0"/><path d="M13.500 25.500h28.500v8H13.500z" fill="#2a5bbd"/><path d="M13.500 33.500h28.500v8H13.500z" fill="#1e418f"/><rect x="4.500" y="15.500" width="19" height="19" rx="1.500" fill="#2250aa"/><text x="6.500" y="29.500" class="jb" font-size="13">W</text></svg></div>
  <i class="rule"></i>
  <div class="app"><svg viewBox="0 0 50 50" width="50" height="50"><rect width="50" height="50" rx="11.500" fill="#fff"/><g fill="none" stroke="#8f979c"><path stroke-width="3" d="M23 6Q22 18 11 24 1 31 9 43M27 6q1 12 12 18 10 7 2 19"/><circle cx="25" cy="0" r="4.500" stroke-width="1.800"/><path stroke-width="1.800" d="M28 13h19M42 10v6"/></g><path d="M16 30h18l2 12H14z" fill="#333537"/><path d="M17 42v9M21 42v9M25 42v9M29 42v9M33 42v9" stroke="#55585a" stroke-width="1.800"/></svg></div>
  <div class="app"><svg viewBox="0 0 50 50" width="50" height="50"><rect width="50" height="50" rx="11.500" fill="url(#gSteel)"/><rect x="1.500" y="1.500" width="47" height="47" rx="10" fill="#040505"/><rect x="5" y="5" width="40" height="40" rx="6" fill="#12211f"/><path d="M5 15h40M5 25h40M5 35h40M15 5v40M25 5v40M35 5v40" stroke="#25453f" stroke-width=".8"/><path d="M6 28l4-1 2 2 2-20 2 26 2-8 5 2 3-6 4 5 4-3 3 4h5" fill="none" stroke="#59c0a3" stroke-width="1.500"/></svg></div>
  <div class="app"><svg viewBox="0 0 50 50" width="50" height="50"><rect width="50" height="50" rx="11.500" fill="#f4f3f1"/><rect x="3.500" y="4" width="43" height="42" rx="8" fill="url(#gSky)"/><path d="M3.500 27h43v7h-43z" fill="#26406f"/><path d="M3.500 33h43v5q0 8-8 8h-27q-8 0-8-8z" fill="#cfdbe6"/><path d="M8 44q8-6 16 0z" fill="#a08255"/><path d="M26 35l-3 13q-1 4 4 4h21q5 0 4-4l-4-13z" fill="#e4e6e6" stroke="#8b8d8d"/><rect x="26" y="24.500" width="22" height="10" rx="3" fill="#121212"/><path d="M31 39h12M30 44h10" stroke="#444" stroke-width="1.600" stroke-dasharray="3 1"/></svg></div>
  <i class="rule"></i>
  <div class="app"><svg viewBox="0 0 50 50" width="50" height="50"><path d="M3 2h44l-5 45q-1 5-17 5T8 47z" fill="url(#gTrash)" opacity=".92"/><ellipse cx="25" cy="3.500" rx="22" ry="5" fill="#4a4d50" stroke="#a7aaac" stroke-width="1"/><path d="M6 5l5-9 6 2 5-3 5 4 7-4 4 5 6 0-2 7-8 2-9-2-9 3z" fill="#e9e9e7"/><path d="M12-1l5 6M32-1l-4 7" stroke="#b54a3c" stroke-width="2"/><path d="M20-2l3 7M37 1l-3 5" stroke="#2f4f78" stroke-width="2"/></svg></div>
</footer>
</body>
</html>
```
FILE: styles.css
```css
* { box-sizing: border-box; margin: 0; }
html, body { width: 3360px; height: 2100px; overflow: hidden; }
body { background: #010108; font-family: "Inter", "Liberation Sans", sans-serif; position: relative; display: flex; flex-direction: column; }
svg { display: block; flex: none; overflow: visible; }
.defs { position: absolute; }
.desktop { position: absolute; left: 0; bottom: 0; overflow: hidden; }
span, b, th, td, h1, p { white-space: nowrap; }

.menubar { height: 50px; padding-bottom: 5px; display: flex; justify-content: space-between; align-items: center; color: #fff; font-size: 25px; font-weight: 500; letter-spacing: .15px; }
.menus { display: grid; grid-template-columns: 71px 113px 84px 89px 100px 128px 176px 132px 84px 138px 68px; align-items: center; padding-left: 38px; }
.menus b { font-weight: 700; letter-spacing: 1px; }
.menus .snug { letter-spacing: -.55px; }
.status { display: grid; grid-template-columns: 78px 68px 67px 85px 80px 63px 135px 108px; align-items: center; color: #e8e8e8; font-size: 25.500px; }
.date { letter-spacing: .65px; }
.time { letter-spacing: 1.200px; }

.window { height: 1954px; border-radius: 20px; overflow: hidden; display: flex; flex-direction: column; position: relative; box-shadow: 0 0 0 1px #000; }
.chrome { height: 214px; background: #213256; position: relative; }
.chrome::after { content: ""; position: absolute; inset: 0; border: 2px solid #515c70; border-bottom-color: #3f4f72; border-radius: 20px 20px 0 0; pointer-events: none; }
.tabstrip { height: 76px; background: #0e1a2f; display: flex; align-items: flex-end; color: #b9bcc2; font-size: 23.500px; }
.lights { width: 184px; height: 74px; padding-left: 42px; display: flex; gap: 16px; align-items: center; }
.lights i { width: 24px; height: 24px; border-radius: 50%; }
.red { background: #ed6a5f; }
.yellow { background: #f5bf4f; }
.green { background: #62c655; }
.tab { width: 478px; height: 60px; padding-left: 16px; display: flex; align-items: center; gap: 16px; }
.tab-title { letter-spacing: .150px; margin-top: -1px; }
.tab.active { width: 480px; margin-right: -2px; background: #213256; color: #fff; font-weight: 500; border-radius: 8px 8px 0 0; }
.active .tab-title { letter-spacing: .450px; }
.close { margin-left: auto; margin-right: 16px; }
.docs { position: relative; }
.docs::after { content: ""; position: absolute; right: -2px; top: 14px; width: 2px; height: 46px; background: #4a5364; }
.docs .fade { letter-spacing: .340px; -webkit-mask-image: linear-gradient(90deg, #000 88%, transparent); mask-image: linear-gradient(90deg, #000 88%, transparent); }
.plus { margin: 0 0 17px auto; }
.docs { flex: none; }
.plus { margin-left: 34px; }
.chevron { margin: 0 38px 24px auto; }

.toolbar { height: 72px; display: flex; align-items: center; }
.navbtns { display: grid; grid-template-columns: repeat(5, 64px); justify-items: center; padding: 0 12px; }
.navbtns path, .line path, .line rect { fill: none; stroke: #a9b9de; stroke-width: 2.300; stroke-linejoin: round; }
.navbtns .dim path { stroke: #5c6d94; }
.navbtns .solid, .line path.solid { fill: #a9b9de; }
.address { width: 2381px; height: 56px; border-radius: 8px; background: #202124; display: flex; align-items: center; padding-left: 23px; }
.url { flex: 1; margin-left: 18px; color: #9a9da1; font-size: 27px; letter-spacing: .450px; }
.url b { color: #fff; font-weight: 400; }
.address svg:nth-of-type(2) { margin-right: 38px; }
.bar { width: 2px; height: 32px; margin: 0 22px 0 27px; background: #b9bbbe; }
.address svg:nth-of-type(4) { margin-right: 34px; }
.address svg:nth-of-type(5) { margin-right: 17px; }
.extensions { margin-left: 13px; display: grid; grid-template-columns: repeat(5, 64px); justify-items: center; align-items: center; }
.owl { filter: drop-shadow(0 2px 3px rgba(0,0,0,.4)); }
.wallet { width: 88px; margin-right: 13px; padding-left: 27px; position: relative; }
.badge { position: absolute; left: 48px; top: -2px; width: 24px; height: 24px; border-radius: 12px; background: #e8603c; }
.vpn { width: 121px; height: 52px; border: 2px solid #1a2947; border-radius: 26px; display: flex; align-items: center; padding-left: 19px; gap: 8px; color: #e9ecf5; font-size: 23.500px; font-weight: 500; letter-spacing: -.300px; }
.burger { margin-left: 22px; }

.bookmarks { height: 64px; padding: 0 31px 8px 28px; display: grid; grid-template-columns: 48px 256px 47px 261px 64px 64px 64px 48px 200px 1fr; align-items: center; color: #fff; font-size: 23.500px; letter-spacing: .170px; }
.bookmarks span { margin-top: -2px; }
.bookmarks .loose { letter-spacing: .600px; }
.allbm { justify-self: end; height: 32px; border-left: 2px solid #42537a; padding-left: 18px; display: flex; align-items: center; gap: 17px; letter-spacing: 0; }

.page { flex: 1; background: #f3f4f6; position: relative; }
.nav { height: 130px; background: #fff; border-bottom: 2px solid #f0f1f3; }
.container { width: 2288px; height: 128px; margin: 0 auto; display: flex; justify-content: space-between; align-items: center; color: #6b7280; font-size: 28px; font-weight: 450; letter-spacing: 1.500px; }
.brand, .user { display: flex; align-items: center; }
.brand { gap: 24px; padding-top: 3px; }
.user { gap: 8px; padding-bottom: 2px; margin-right: -46px; }
.heading { height: 146px; background: #fff; padding-left: 464px; display: flex; align-items: center; box-shadow: 0 2px 5px rgba(0,0,0,.16); position: relative; }
h1 { font-size: 39px; font-weight: 600; color: #1f2937; letter-spacing: 1.770px; }
main { padding: 48px 464px; }
table { width: 2432px; table-layout: fixed; border-collapse: collapse; background: #fff; }
.c1 { width: 146px; }
.c2 { width: 425px; }
.c3 { width: 378px; }
.c4 { width: 642px; }
.c5 { width: 361px; }
.c6 { width: 480px; }
th, td { padding: 0 0 0 48px; text-align: left; }
th { height: 80px; padding-bottom: 1px; background: #f9fafc; color: #374151; font-size: 23.500px; font-weight: 700; letter-spacing: 1.360px; }
td { height: 168px; color: #111827; font-size: 27px; font-weight: 450; }
.num { color: #6b7280; font-weight: 700; }
.invoice { letter-spacing: .300px; }
.total { letter-spacing: .900px; }
.ago { font-size: 28px; letter-spacing: 1.200px; }
.used { color: #e05c58; font-size: 28px; font-weight: 600; letter-spacing: 1.900px; }
.print { width: 335px; height: 88px; margin-bottom: 16px; padding: 0 0 0 40px; border: 0; border-radius: 16px; background: #d9a339; color: #fff; font: 450 28px "Inter", sans-serif; letter-spacing: .850px; display: flex; align-items: center; gap: 16px; }
.picker { position: absolute; right: 20px; bottom: 20px; }

.dock { align-self: center; position: relative; margin-top: 2px; height: 84px; padding: 12px 12px 0; display: flex; gap: 16px; background: #2f2f2b; border: 2px solid #51514d; border-radius: 24px; box-shadow: 0 0 64px rgba(0,0,0,.3); }
.app { width: 50px; display: flex; flex-direction: column; align-items: center; gap: 8px; }
.running::after { content: ""; width: 8px; height: 8px; border-radius: 50%; background: #a9a9a6; }
.rule { width: 2px; height: 60px; margin: -2px 4px 0 8px; background: #666662; }
.jb { font-family: "Open Sans", sans-serif; font-weight: 700; font-size: 17px; fill: #fff; }
.jb[font-size] { font-size: 14px; }
.mono { font-family: "Liberation Mono", monospace; font-weight: 700; }
```
